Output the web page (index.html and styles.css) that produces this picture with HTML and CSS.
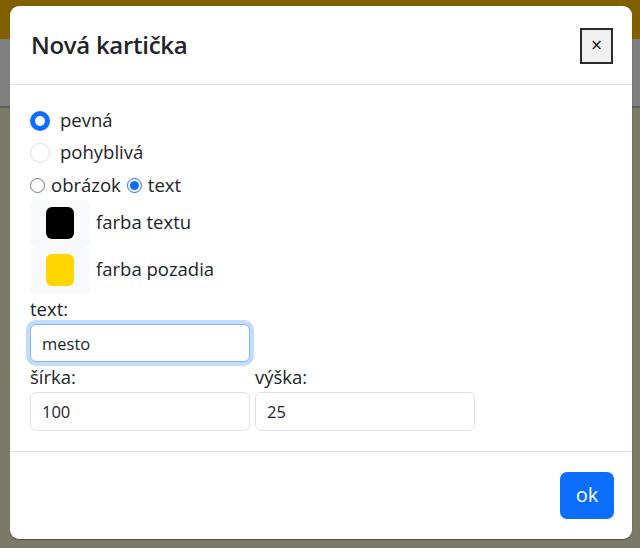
FILE: index.html
```html
<!DOCTYPE html>
<html lang="sk">
<head>
<meta charset="utf-8">
<title>Nová kartička</title>
<link rel="stylesheet" href="styles.css">
</head>
<body>
<div class="page">
  <div class="band-top"></div>
  <div class="band-mid"></div>
  <div class="band-line"></div>
  <div class="band-rest"></div>
</div>

<div class="modal">
  <div class="modal-header">
    <h4 class="modal-title">Nová kartička</h4>
    <button class="close-btn" type="button">×</button>
  </div>
  <div class="modal-body">
    <div class="check-row">
      <span class="bs-radio checked"></span>
      <span class="check-label">pevná</span>
    </div>
    <div class="check-row">
      <span class="bs-radio"></span>
      <span class="check-label">pohyblivá</span>
    </div>
    <div class="native-row">
      <input class="native-radio" type="radio" name="kind">
      <span>obrázok</span>
      <input class="native-radio" type="radio" name="kind" checked>
      <span>text</span>
    </div>
    <div class="color-row">
      <span class="swatch-box"><span class="swatch swatch-black"></span></span>
      <span class="color-label">farba textu</span>
    </div>
    <div class="color-row">
      <span class="swatch-box"><span class="swatch swatch-yellow"></span></span>
      <span class="color-label">farba pozadia</span>
    </div>
    <div class="field-label">text:</div>
    <div class="input focused">mesto</div>
    <div class="size-grid">
      <div class="size-col">
        <div class="field-label">šírka:</div>
        <div class="input">100</div>
      </div>
      <div class="size-col">
        <div class="field-label">výška:</div>
        <div class="input">25</div>
      </div>
    </div>
  </div>
  <div class="modal-footer">
    <button class="ok-btn" type="button">ok</button>
  </div>
</div>
</body>
</html>
```

FILE: styles.css
```css
* { box-sizing: border-box; }

html, body {
  margin: 0;
  padding: 0;
  height: 100%;
}

body {
  font-family: "Open Sans", "Noto Sans", sans-serif;
  color: #212529;
  background: #7b7a69;
  overflow: hidden;
}

.page {
  display: flex;
  flex-direction: column;
  height: 548px;
}

.band-top { height: 39px; background: #7f5f00; }
.band-mid { height: 67px; background: #808080; }
.band-line { height: 2px; background: #5d5d55; }
.band-rest { flex: 1; background: #7b7a69; }

.modal {
  position: absolute;
  left: 10px;
  top: 6px;
  width: 622px;
  height: 533px;
  background: #fff;
  border-radius: 9px;
  box-shadow: 0 1px 1px rgba(0,0,0,0.35);
  display: flex;
  flex-direction: column;
}

.modal-header {
  height: 79px;
  display: flex;
  align-items: center;
  justify-content: space-between;
  padding: 0 19px 0 21px;
  border-bottom: 1px solid #dee2e6;
}

.modal-title {
  margin: 0;
  font-size: 24px;
  font-weight: 600;
  line-height: 1.2;
  letter-spacing: -0.3px;
}

.close-btn {
  width: 33px;
  height: 36px;
  margin-top: 1px;
  background: #efefef;
  border: 2px solid #2a2a2a;
  border-radius: 0;
  font-family: "DejaVu Sans", sans-serif;
  font-size: 15px;
  line-height: 1;
  color: #111;
  padding: 0;
}

.modal-body {
  padding: 21px 20px 20px 20px;
  display: flex;
  flex-direction: column;
  border-bottom: 1px solid #dee2e6;
}

.check-row {
  display: flex;
  align-items: center;
  height: 30px;
  margin-bottom: 2px;
  font-size: 18.5px;
}

.bs-radio {
  width: 20px;
  height: 20px;
  border-radius: 50%;
  border: 1px solid #dee2e6;
  background: #fff;
  margin-right: 10px;
  flex: none;
}

.bs-radio.checked {
  border: 5px solid #0d6efd;
  background: #fff;
}

.check-label { line-height: 30px; padding-bottom: 2px; }

.native-row {
  display: flex;
  align-items: center;
  height: 30px;
  font-size: 18.5px;
}

.native-radio {
  width: 15px;
  height: 15px;
  margin: 0 6px 0 0;
  accent-color: #0d6efd;
}

.native-row span { margin-right: 6px; padding-bottom: 1px; }

.color-row {
  display: flex;
  align-items: center;
  gap: 6px;
  height: 47px;
  font-size: 18.5px;
}

.color-label { padding-bottom: 4px; }

.swatch-box {
  width: 60px;
  height: 47px;
  background: #f8f9fa;
  border-radius: 6px;
  padding: 7px 16px 8px 16px;
  display: flex;
}

.swatch {
  flex: 1;
  border-radius: 6px;
}

.swatch-black { background: #000; }
.swatch-yellow { background: #ffd600; }

.field-label {
  font-size: 18.5px;
  line-height: 30px;
}

.input {
  width: 220px;
  height: 39px;
  border: 1px solid #dee2e6;
  border-radius: 6px;
  padding: 0 11px;
  font-size: 16.5px;
  display: flex;
  align-items: center;
  background: #fff;
}

.input.focused {
  height: 38px;
  border-color: #86b7fe;
  box-shadow: 0 0 0 4px rgba(13,110,253,0.25);
}

.size-grid {
  display: flex;
  gap: 5px;
}

.modal-footer {
  flex: 1;
  display: flex;
  justify-content: flex-end;
  align-items: flex-start;
  padding: 20px 18px 0 0;
}

.ok-btn {
  width: 54px;
  height: 47px;
  border: none;
  border-radius: 7px;
  background: #0d6efd;
  color: #fff;
  font-family: "Open Sans", "Noto Sans", sans-serif;
  font-size: 20px;
  padding: 0 0 2px 0;
}
```
